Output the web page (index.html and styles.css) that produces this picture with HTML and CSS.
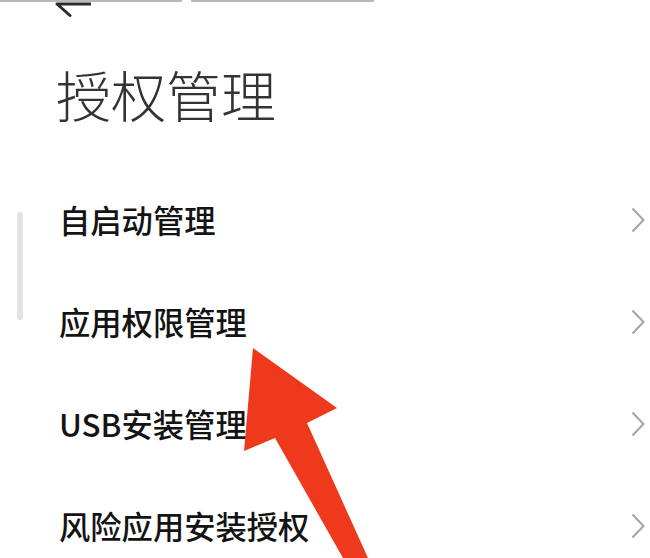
FILE: index.html
```html
<!DOCTYPE html>
<html lang="zh-CN">
<head>
<meta charset="utf-8">
<title>授权管理</title>
<link rel="stylesheet" href="styles.css">
</head>
<body>
<div class="page">
  <div class="topline">
    <span class="seg seg-a"></span>
    <span class="seg seg-b"></span>
  </div>
  <svg class="back" width="50" height="16" viewBox="0 0 50 16">
    <path d="M16 2 H50 M16 2 L29 13.5" fill="none" stroke="#2a2a2a" stroke-width="3" stroke-linecap="round"/>
  </svg>
  <h1 class="title">授权管理</h1>
  <ul class="list">
    <li class="row"><span class="label">自启动管理</span><svg class="chev" width="14" height="26" viewBox="0 0 14 26"><path d="M1.5 1.5 L12.5 13 L1.5 24.5" fill="none" stroke="#a3a3a3" stroke-width="2"/></svg></li>
    <li class="row"><span class="label">应用权限管理</span><svg class="chev" width="14" height="26" viewBox="0 0 14 26"><path d="M1.5 1.5 L12.5 13 L1.5 24.5" fill="none" stroke="#a3a3a3" stroke-width="2"/></svg></li>
    <li class="row"><span class="label">USB安装管理</span><svg class="chev" width="14" height="26" viewBox="0 0 14 26"><path d="M1.5 1.5 L12.5 13 L1.5 24.5" fill="none" stroke="#a3a3a3" stroke-width="2"/></svg></li>
    <li class="row"><span class="label">风险应用安装授权</span><svg class="chev" width="14" height="26" viewBox="0 0 14 26"><path d="M1.5 1.5 L12.5 13 L1.5 24.5" fill="none" stroke="#a3a3a3" stroke-width="2"/></svg></li>
  </ul>
  <div class="scrollbar"></div>
  <svg class="pointer" width="650" height="558" viewBox="0 0 650 558">
    <polygon points="253,348 337,408 307,423 368,558 343,558 275,438 244,451" fill="#ef391c"/>
  </svg>
</div>
</body>
</html>
```

FILE: styles.css
```css
html, body {
  margin: 0;
  padding: 0;
  background: #ffffff;
}
.page {
  position: relative;
  width: 650px;
  height: 558px;
  overflow: hidden;
  font-family: "Noto Sans CJK SC", "Noto Sans", sans-serif;
}
.topline {
  display: flex;
  height: 2px;
}
.seg {
  display: block;
  height: 2px;
  background: #b9b9b9;
}
.seg-a {
  width: 182px;
}
.seg-b {
  width: 183px;
  margin-left: 9px;
}
.back {
  display: block;
  margin-left: 41px;
}
.title {
  margin: 45px 0 0 56px;
  font-size: 55px;
  line-height: 60px;
  font-weight: 300;
  color: #333333;
}
.list {
  list-style: none;
  margin: 0;
  padding: 0;
  margin-top: 46px;
}
.row {
  display: flex;
  align-items: center;
  justify-content: space-between;
  height: 102px;
  padding: 0 5px 0 59px;
}
.label {
  font-size: 31.3px;
  font-weight: 500;
  color: #141414;
  line-height: 1;
}
.chev {
  display: block;
}
.scrollbar {
  position: absolute;
  left: 17px;
  top: 212px;
  width: 6px;
  height: 108px;
  border-radius: 3px;
  background: #e2e2e2;
}
.pointer {
  position: absolute;
  left: 0;
  top: 0;
}
```
